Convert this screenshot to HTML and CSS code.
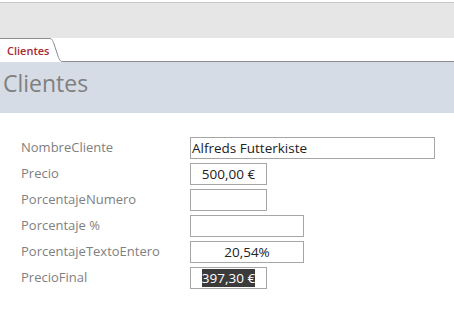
FILE: index.html
```html
<!DOCTYPE html>
<html lang="es">
<head>
  <meta charset="UTF-8" />
  <title>Clientes</title>
  <link rel="stylesheet" href="styles.css">
</head>
<body>

  <!-- Ribbon area -->
  <div class="ribbon"></div>

  <!-- Document tabs -->
  <div class="tab-strip">
    <div class="tab">
      <span class="tab-mark"></span>
      <span class="tab-label">Clientes</span>
    </div>
    <svg class="tab-curve" width="14" height="24" viewBox="0 0 14 24">
      <path d="M0 0.5 C3 0.5 3.5 2 5 6 L9 18 C10.5 22 11 23.5 14 23.5" fill="#fff" stroke="#8c8c8c" stroke-width="1"/>
    </svg>
    <div class="tab-rest"></div>
  </div>

  <div class="form-header">
    <h1>Clientes</h1>
  </div>

  <div class="form-body">
    <label>NombreCliente</label>
    <div class="field wide left">Alfreds Futterkiste</div>

    <label>Precio</label>
    <div class="field short">500,00 €</div>

    <label>PorcentajeNumero</label>
    <div class="field short"></div>

    <label>Porcentaje %</label>
    <div class="field mid"></div>

    <label>PorcentajeTextoEntero</label>
    <div class="field mid">20,54%</div>

    <label>PrecioFinal</label>
    <div class="field short"><span class="selected">397,30 €</span></div>
  </div>

</body>
</html>
```

FILE: styles.css
```css
body {
  margin: 0;
  background: #fff;
  font-family: "Open Sans", "Noto Sans", sans-serif;
}

.ribbon {
  margin-top: 2px;
  height: 35px;
  background: #e6e6e6;
  border-top: 1px solid #c8c8c8;
}

.tab-strip {
  display: flex;
  height: 24px;
}

.tab {
  display: flex;
  align-items: center;
  width: 49px;
  border-top: 1px solid #8c8c8c;
  box-sizing: border-box;
  background: #fff;
}

.tab-mark {
  width: 2px;
  height: 14px;
  background: #6b5a7a;
}

.tab-label {
  margin-left: 7px;
  font-size: 11px;
  font-weight: 600;
  color: #a82834;
}

.tab-curve {
  display: block;
}

.tab-rest {
  flex: 1;
  border-bottom: 1px solid #8c8c8c;
}

.form-header {
  height: 51px;
  background: #d6dce5;
}

.form-header h1 {
  margin: 0;
  padding: 5px 0 0 3px;
  font-size: 23px;
  font-weight: 400;
  color: #808080;
}

.form-body {
  display: grid;
  grid-template-columns: 169px auto;
  grid-auto-rows: 26px;
  padding: 24px 0 0 21px;
}

.form-body label {
  align-self: start;
  font-size: 13px;
  line-height: 20px;
  color: #808080;
}

.field {
  height: 22px;
  box-sizing: border-box;
  border: 1px solid #a6a6a6;
  font-size: 13.5px;
  line-height: 20px;
  color: #222;
  text-align: center;
}

.field.left {
  text-align: left;
  padding-left: 1px;
}

.wide { width: 245px; }
.short { width: 77px; }
.mid { width: 114px; }

.selected {
  background: #3b3b3b;
  color: #fff;
}
```
